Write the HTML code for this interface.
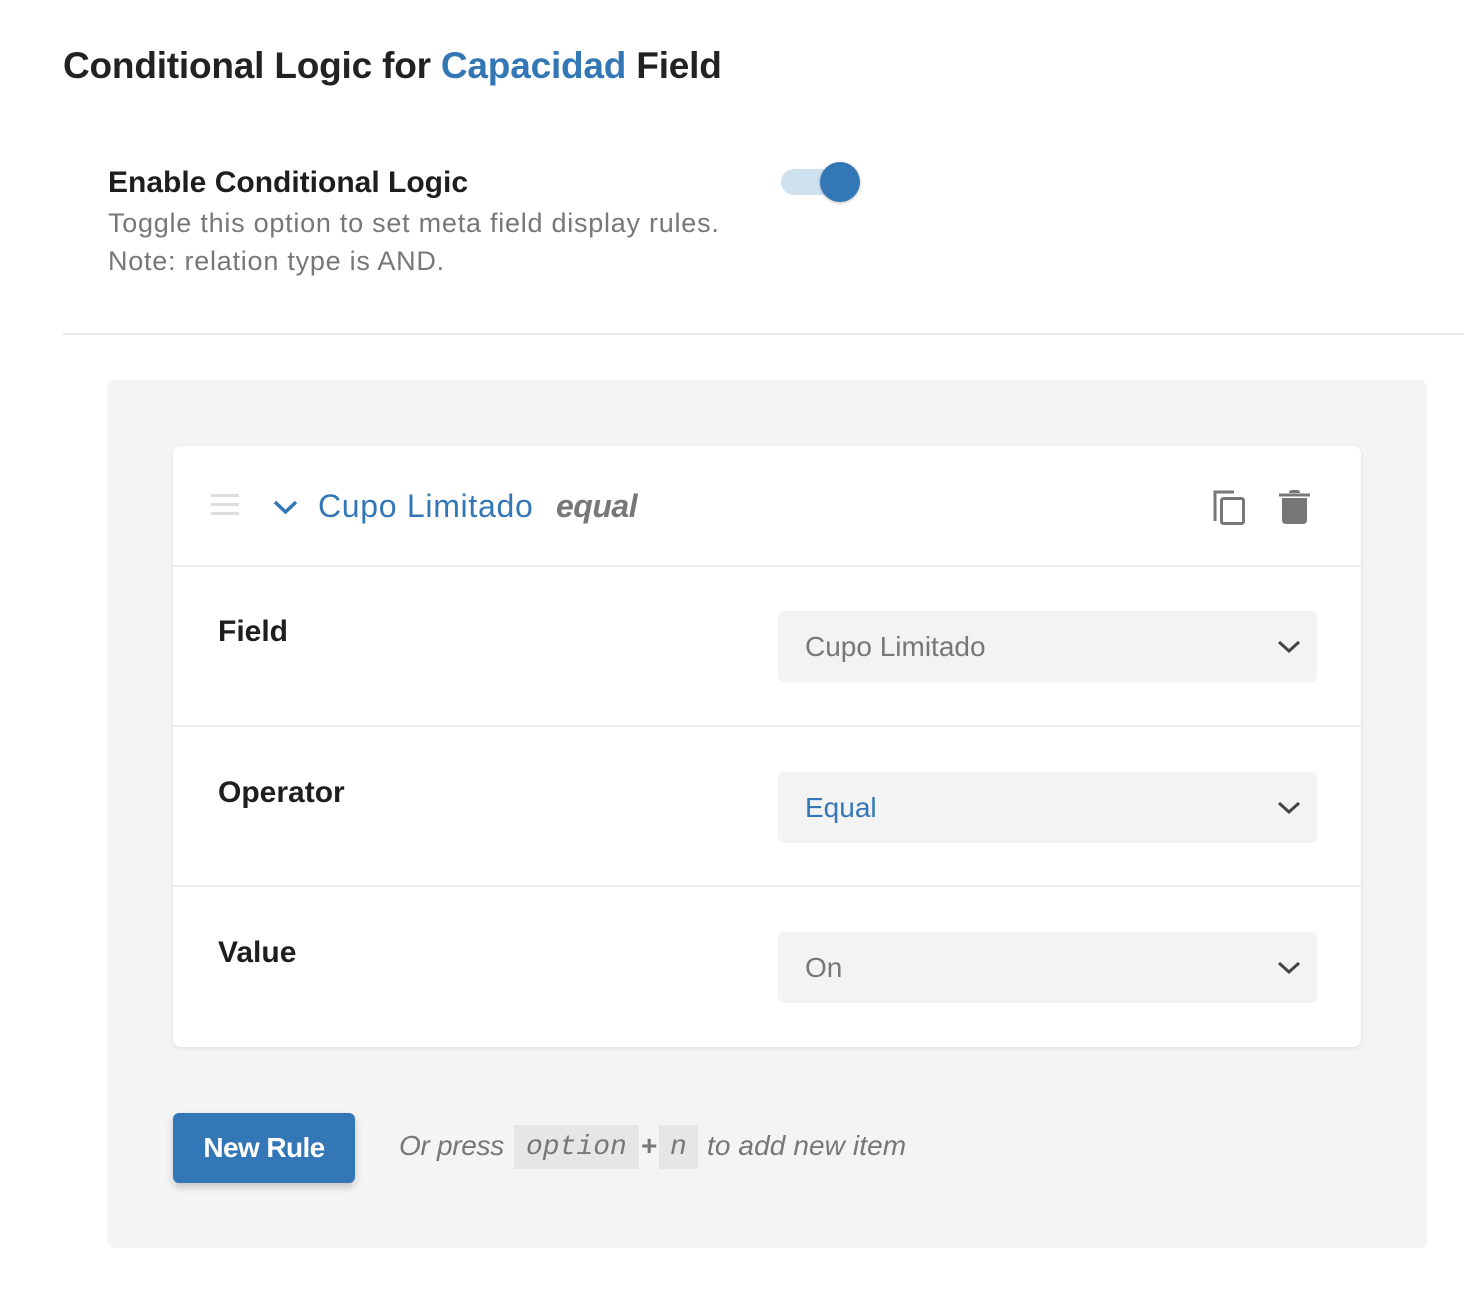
<!DOCTYPE html>
<html><head><style>
*{box-sizing:border-box;margin:0;padding:0}
body{width:1464px;height:1294px;background:#fff;font-family:"Liberation Sans",Arial,sans-serif;position:relative;overflow:hidden;color:#1e1e1e}
.a{position:absolute;white-space:nowrap}
.title{left:63px;top:44px;font-size:37px;font-weight:bold;letter-spacing:-0.2px;line-height:44px;color:#222}
.blue{color:#3477b7}
.lbl{font-weight:bold;font-size:30px}
.desc{font-size:27px;color:#777;letter-spacing:0.75px}
.panel{left:107px;top:380px;width:1320px;height:868px;background:#f4f4f4;border-radius:8px}
.card{left:173px;top:446px;width:1188px;height:601px;background:#fff;border-radius:8px;box-shadow:0 1px 4px rgba(0,0,0,.1)}
.sep{left:173px;width:1188px;height:2px;background:#ececec}
.sel{left:778px;width:539px;height:71px;background:#f3f3f3;border-radius:6px;font-size:28px;color:#777;padding-left:27px;line-height:71px}
.sel svg{position:absolute;right:16px;top:28px}
</style></head><body>
<div class="a title">Conditional Logic for <span class="blue">Capacidad</span> Field</div>
<div class="a lbl" style="left:108px;top:166px">Enable Conditional Logic</div>
<div class="a desc" style="left:108px;top:208px">Toggle this option to set meta field display rules.</div>
<div class="a desc" style="left:108px;top:246px">Note: relation type is AND.</div>
<div class="a" style="left:781px;top:169px;width:68px;height:26px;border-radius:13px;background:#cfe1ef"></div>
<div class="a" style="left:820px;top:162px;width:40px;height:40px;border-radius:50%;background:#3477b7;box-shadow:0 1px 3px rgba(0,0,0,.25)"></div>
<div class="a" style="left:63px;top:333px;width:1401px;height:2px;background:#e6e6e6"></div>
<div class="a panel"></div>
<div class="a card"></div>
<svg class="a" style="left:211px;top:494px" width="30" height="24"><rect y="0" width="28" height="3" fill="#ddd"/><rect y="9" width="28" height="3" fill="#ddd"/><rect y="18" width="28" height="3" fill="#ddd"/></svg>
<svg class="a" style="left:272px;top:499px" width="28" height="18"><path d="M3 3 L13.5 13 L24 3" stroke="#3477b7" stroke-width="3.5" fill="none"/></svg>
<div class="a blue" style="left:318px;top:488px;font-size:32px;letter-spacing:0.7px">Cupo Limitado</div>
<div class="a" style="left:556px;top:488px;font-size:32px;font-style:italic;font-weight:bold;color:#777;letter-spacing:-0.5px">equal</div>
<svg class="a" style="left:1212px;top:489px" width="36" height="38"><path d="M3 32 V3 H22" stroke="#777" stroke-width="3" fill="none"/><rect x="9.5" y="9.5" width="22" height="25" rx="2" stroke="#777" stroke-width="3" fill="none"/></svg>
<svg class="a" style="left:1278px;top:488px" width="34" height="38"><path d="M1 7 H32" stroke="#777" stroke-width="3"/><path d="M11 5 Q11 2 14 2 H19 Q22 2 22 5Z" fill="#777"/><path d="M4 10 H29 V32 Q29 36 25 36 H8 Q4 36 4 32Z" fill="#777"/></svg>
<div class="a sep" style="top:565px"></div>
<div class="a sep" style="top:725px"></div>
<div class="a sep" style="top:885px"></div>
<div class="a lbl" style="left:218px;top:615px">Field</div>
<div class="a lbl" style="left:218px;top:776px">Operator</div>
<div class="a lbl" style="left:218px;top:936px">Value</div>
<div class="a sel" style="top:611px">Cupo Limitado<svg width="24" height="16"><path d="M2 3 L12 12 L22 3" stroke="#444" stroke-width="3" fill="none"/></svg></div>
<div class="a sel" style="top:772px;color:#3477b7">Equal<svg width="24" height="16"><path d="M2 3 L12 12 L22 3" stroke="#444" stroke-width="3" fill="none"/></svg></div>
<div class="a sel" style="top:932px">On<svg width="24" height="16"><path d="M2 3 L12 12 L22 3" stroke="#444" stroke-width="3" fill="none"/></svg></div>
<div class="a" style="left:173px;top:1113px;width:182px;height:70px;background:#3477b7;border-radius:6px;box-shadow:0 4px 8px rgba(0,0,0,.2);color:#fff;font-weight:bold;font-size:28px;text-align:center;line-height:70px;letter-spacing:-0.6px">New Rule</div>
<div class="a" style="left:399px;top:1130px;font-size:28px;font-style:italic;color:#777;letter-spacing:-0.3px">Or press</div>
<div class="a" style="left:514px;top:1125px;width:125px;height:44px;background:#e6e6e6"></div>
<div class="a" style="left:526px;top:1132px;font-family:'Liberation Mono',monospace;font-style:italic;font-size:28px;color:#777">option</div>
<div class="a" style="left:641px;top:1130px;font-size:28px;font-weight:bold;color:#777">+</div>
<div class="a" style="left:659px;top:1125px;width:39px;height:44px;background:#e6e6e6"></div>
<div class="a" style="left:670px;top:1132px;font-family:'Liberation Mono',monospace;font-style:italic;font-size:28px;color:#777">n</div>
<div class="a" style="left:707px;top:1130px;font-size:28px;font-style:italic;color:#777;letter-spacing:0.1px">to add new item</div>
</body></html>
